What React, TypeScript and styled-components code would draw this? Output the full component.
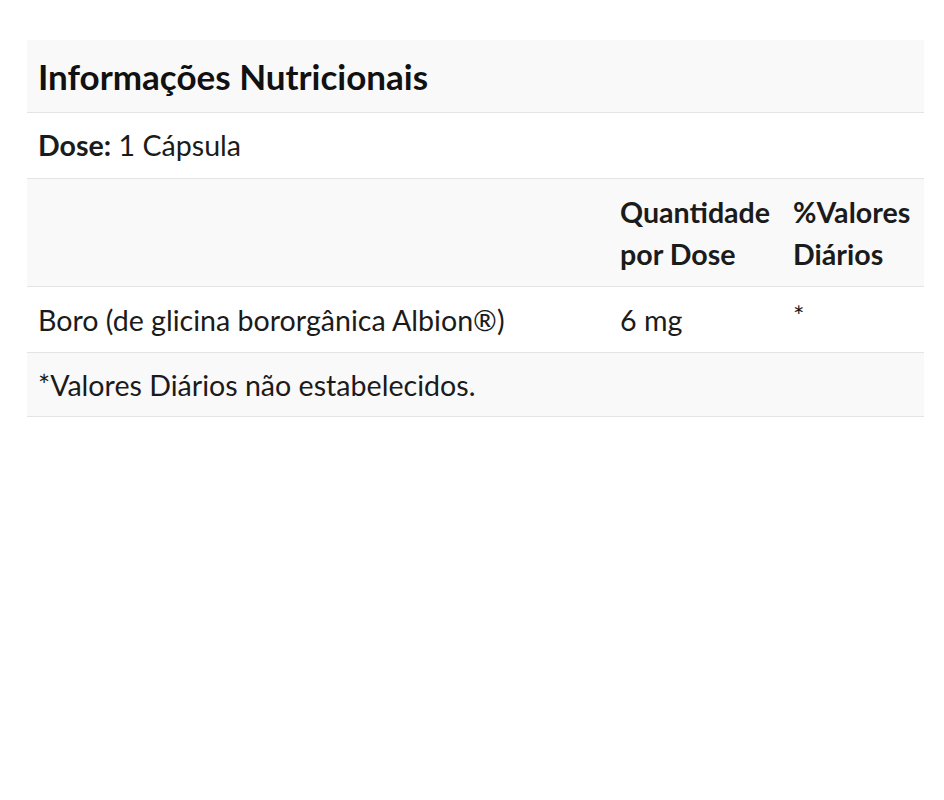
import React from "react";
import styled, { createGlobalStyle } from "styled-components";

const Global = createGlobalStyle`
  html, body { margin: 0; padding: 0; background: #ffffff; }
  body { font-family: Lato, "Open Sans", sans-serif; color: #1b1b1b; }
`;

const Page = styled.div`
  padding: 40px 20px 0 27px;
`;

const Table = styled.div`
  width: 897px;
  font-size: 28.6px;
  line-height: 42px;
`;

const Row = styled.div<{ $shade?: boolean }>`
  display: grid;
  grid-template-columns: 582px 173px 1fr;
  background: ${(p) => (p.$shade ? "#f9f9f9" : "#ffffff")};
  border-bottom: 1px solid #e4e4e4;
  padding: 12px 0 11px;
`;

const FullRow = styled.div<{ $shade?: boolean; $pb?: number }>`
  background: ${(p) => (p.$shade ? "#f9f9f9" : "#ffffff")};
  border-bottom: 1px solid #e4e4e4;
  padding: 11px 11px ${(p) => p.$pb ?? 11}px;
`;

const Title = styled.h2`
  margin: 0;
  font-size: 35px;
  font-weight: 700;
  line-height: 50px;
  color: #111;
`;

const Cell = styled.div<{ $bold?: boolean }>`
  padding: 0 11px;
  font-weight: ${(p) => (p.$bold ? 700 : 400)};
`;

const Star = styled.span`
  font-size: 27px;
  vertical-align: top;
  line-height: 34px;
`;

const B = styled.b`
  font-weight: 700;
`;

export default function App() {
  return (
    <>
      <Global />
      <Page>
        <Table>
          <FullRow $shade>
            <Title>Informações Nutricionais</Title>
          </FullRow>
          <FullRow $pb={12}>
            <B>Dose:</B> 1 Cápsula
          </FullRow>
          <Row $shade>
            <Cell />
            <Cell $bold>Quantidade por Dose</Cell>
            <Cell $bold>%Valores Diários</Cell>
          </Row>
          <Row>
            <Cell>Boro (de glicina bororgânica Albion®)</Cell>
            <Cell>6 mg</Cell>
            <Cell><Star>*</Star></Cell>
          </Row>
          <FullRow $shade $pb={10}>*Valores Diários não estabelecidos.</FullRow>
        </Table>
      </Page>
    </>
  );
}
